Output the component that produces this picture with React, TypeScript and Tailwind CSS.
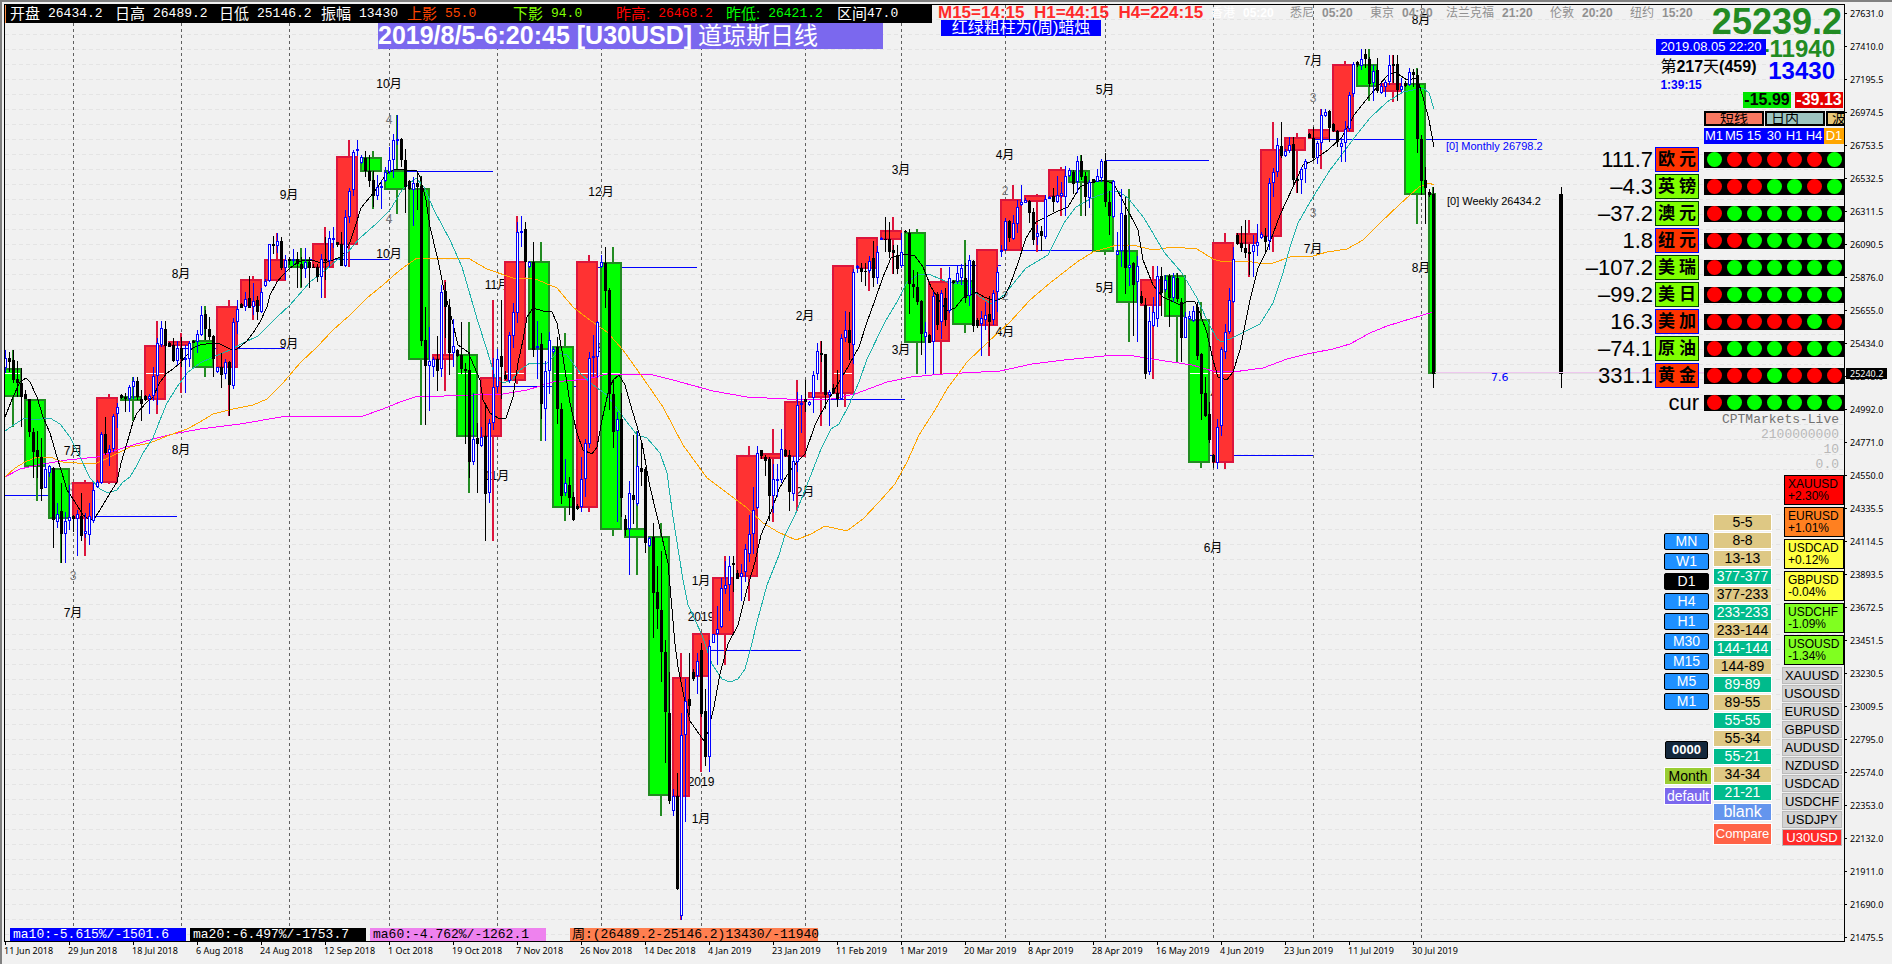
import clsx from "clsx";

// [x, width, wickX, up, high, top, bottom, low]
type Week = [number, number, number, number, number, number, number, number];
// [up, high, top, bottom, low]
type Day = [number, number, number, number, number];

const weeks: { week: Week; days: Day[] }[] = [
  { week: [0, 22, 13, 0, 350, 368, 397, 427], days: [[1, 350, 358, 368, 373], [0, 352, 358, 362, 372], [0, 350, 360, 380, 383], [0, 361, 379, 383, 397], [0, 368, 383, 397, 427]] },
  { week: [24, 22, 37, 0, 399, 399, 467, 501], days: [[0, 390, 394, 399, 399], [0, 399, 399, 432, 437], [0, 428, 432, 452, 478], [0, 431, 450, 457, 478], [0, 438, 457, 489, 501], [1, 463, 469, 488, 488]] },
  { week: [48, 22, 61, 0, 468, 468, 519, 563], days: [[1, 465, 466, 473, 477], [0, 467, 468, 520, 548], [1, 503, 514, 522, 528], [0, 483, 511, 534, 563], [1, 512, 521, 534, 563], [1, 485, 517, 521, 530]] },
  { week: [72, 22, 85, 1, 480, 482, 519, 556], days: [[0, 515, 516, 519, 532], [1, 510, 514, 519, 556], [0, 493, 516, 536, 541], [1, 513, 531, 534, 538], [1, 503, 516, 535, 545], [1, 483, 490, 521, 523]] },
  { week: [96, 22, 109, 1, 394, 397, 483, 484], days: [[1, 480, 482, 487, 488], [1, 432, 434, 483, 484], [0, 417, 434, 453, 455], [1, 445, 449, 453, 466], [1, 414, 416, 449, 452], [1, 403, 407, 414, 428]] },
  { week: [120, 22, 133, 0, 377, 396, 401, 421], days: [[0, 394, 395, 398, 399], [0, 393, 397, 399, 412], [1, 385, 387, 399, 412], [1, 377, 381, 387, 399], [0, 377, 381, 397, 400], [0, 390, 399, 404, 421]] },
  { week: [144, 22, 157, 1, 321, 345, 400, 414], days: [[0, 395, 396, 400, 401], [1, 394, 396, 399, 414], [1, 367, 376, 396, 401], [1, 338, 343, 376, 405], [1, 321, 328, 345, 347], [0, 321, 329, 346, 375]] },
  { week: [168, 22, 181, 1, 333, 341, 346, 393], days: [[0, 342, 343, 347, 347], [0, 338, 345, 361, 362], [1, 341, 348, 361, 365], [0, 337, 348, 359, 367], [1, 345, 358, 360, 393], [1, 341, 343, 359, 367]] },
  { week: [192, 22, 205, 0, 306, 340, 368, 377], days: [[0, 340, 341, 343, 343], [1, 330, 334, 342, 353], [1, 306, 315, 335, 336], [0, 310, 314, 329, 340], [0, 317, 329, 337, 340], [0, 335, 336, 359, 377]] },
  { week: [216, 22, 229, 1, 300, 306, 368, 416], days: [[1, 367, 367, 372, 373], [0, 353, 367, 375, 388], [1, 359, 362, 374, 379], [0, 361, 362, 385, 416], [1, 318, 322, 386, 389], [1, 300, 309, 322, 334]] },
  { week: [240, 22, 253, 1, 276, 279, 306, 320], days: [[0, 303, 304, 308, 308], [1, 292, 299, 307, 311], [0, 276, 298, 308, 308], [1, 283, 301, 307, 315], [0, 296, 300, 312, 320], [1, 288, 292, 312, 313]] },
  { week: [264, 22, 277, 1, 233, 259, 281, 282], days: [[1, 279, 281, 286, 287], [1, 244, 244, 281, 282], [0, 236, 244, 246, 254], [1, 233, 241, 246, 253], [0, 237, 241, 268, 270], [1, 255, 260, 268, 280]] },
  { week: [288, 22, 301, 0, 248, 259, 268, 288], days: [[0, 257, 259, 261, 265], [1, 249, 259, 261, 265], [0, 252, 259, 264, 288], [0, 257, 264, 269, 287], [1, 248, 262, 269, 278], [0, 257, 262, 268, 288]] },
  { week: [312, 22, 325, 1, 227, 243, 268, 298], days: [[0, 264, 267, 268, 268], [0, 264, 267, 277, 282], [1, 254, 259, 277, 298], [0, 237, 259, 261, 280], [1, 231, 238, 261, 267], [1, 227, 238, 239, 248]] },
  { week: [336, 22, 349, 1, 140, 156, 245, 267], days: [[0, 242, 242, 245, 247], [0, 232, 244, 266, 266], [1, 210, 217, 266, 267], [1, 188, 191, 217, 223], [1, 150, 152, 190, 196], [1, 140, 149, 151, 156]] },
  { week: [360, 22, 373, 0, 151, 157, 172, 209], days: [[1, 155, 157, 163, 164], [0, 151, 158, 171, 177], [0, 155, 171, 181, 187], [0, 171, 180, 196, 207], [1, 175, 187, 196, 200], [1, 180, 186, 188, 209]] },
  { week: [384, 22, 397, 0, 115, 170, 190, 214], days: [[1, 167, 172, 181, 182], [1, 147, 160, 172, 174], [1, 134, 140, 160, 178], [1, 115, 139, 141, 145], [0, 138, 139, 160, 167], [0, 149, 160, 187, 213]] },
  { week: [408, 22, 421, 0, 176, 188, 360, 425], days: [[0, 180, 181, 189, 190], [1, 177, 183, 190, 226], [0, 173, 183, 187, 210], [0, 176, 186, 341, 346], [0, 307, 340, 366, 425], [1, 327, 361, 366, 411]] },
  { week: [432, 22, 445, 1, 280, 354, 360, 391], days: [[1, 357, 359, 367, 377], [0, 336, 359, 371, 391], [1, 285, 292, 369, 377], [0, 282, 291, 307, 338], [0, 299, 307, 353, 375], [1, 319, 346, 353, 367]] },
  { week: [456, 22, 469, 0, 322, 354, 437, 493], days: [[0, 349, 350, 356, 357], [0, 322, 355, 369, 374], [0, 363, 369, 371, 444], [0, 352, 370, 462, 478], [1, 393, 439, 462, 465], [0, 423, 438, 444, 493]] },
  { week: [480, 22, 493, 1, 300, 377, 437, 541], days: [[1, 427, 437, 446, 447], [0, 403, 436, 494, 541], [1, 419, 423, 493, 503], [1, 358, 387, 423, 430], [1, 349, 359, 387, 393], [0, 300, 356, 367, 399]] },
  { week: [504, 22, 517, 1, 216, 261, 381, 384], days: [[0, 371, 375, 379, 380], [1, 332, 335, 381, 383], [1, 303, 312, 336, 348], [1, 222, 232, 313, 323], [1, 216, 231, 233, 247], [0, 222, 229, 262, 277]] },
  { week: [528, 22, 541, 0, 242, 261, 350, 441], days: [[1, 261, 262, 267, 268], [0, 242, 262, 350, 357], [1, 321, 346, 348, 379], [0, 333, 344, 404, 419], [1, 361, 371, 409, 441], [1, 332, 340, 371, 394]] },
  { week: [552, 22, 565, 0, 333, 346, 508, 521], days: [[1, 347, 349, 352, 354], [0, 337, 347, 409, 424], [0, 403, 409, 496, 504], [1, 459, 483, 493, 496], [0, 477, 485, 498, 515], [0, 492, 497, 520, 521]] },
  { week: [576, 22, 589, 1, 255, 261, 508, 512], days: [[0, 504, 506, 509, 510], [1, 457, 479, 507, 512], [1, 439, 443, 479, 497], [1, 352, 358, 444, 448], [1, 335, 356, 358, 377], [1, 321, 322, 357, 378]] },
  { week: [600, 22, 613, 0, 247, 262, 530, 536], days: [[1, 255, 262, 267, 268], [0, 247, 263, 291, 308], [0, 288, 290, 394, 410], [0, 380, 394, 432, 448], [1, 412, 419, 431, 522], [0, 393, 419, 498, 517]] },
  { week: [624, 22, 637, 0, 431, 528, 538, 575], days: [[0, 515, 519, 530, 536], [1, 481, 493, 529, 575], [0, 435, 495, 500, 524], [1, 431, 466, 504, 506], [0, 443, 468, 472, 486], [0, 467, 469, 543, 553]] },
  { week: [648, 22, 661, 0, 523, 536, 796, 816], days: [[1, 537, 538, 546, 547], [0, 523, 537, 593, 638], [0, 566, 592, 609, 629], [0, 551, 610, 652, 682], [0, 640, 652, 712, 763], [0, 672, 713, 801, 804]] },
  { week: [672, 18, 681, 1, 653, 677, 797, 920], days: [[1, 789, 796, 811, 816], [0, 773, 796, 889, 890], [1, 713, 735, 916, 920], [1, 679, 701, 735, 822], [0, 653, 699, 706, 715]] },
  { week: [692, 18, 701, 1, 632, 633, 677, 772], days: [[0, 669, 672, 679, 681], [1, 653, 661, 676, 694], [0, 643, 650, 714, 717], [0, 689, 711, 757, 766], [1, 640, 646, 757, 772]] },
  { week: [712, 22, 725, 1, 556, 577, 635, 665], days: [[1, 634, 634, 643, 643], [1, 606, 629, 634, 665], [1, 578, 588, 627, 628], [1, 561, 585, 589, 594], [1, 556, 566, 585, 611], [0, 556, 563, 565, 592]] },
  { week: [736, 22, 749, 1, 446, 455, 577, 601], days: [[0, 570, 573, 579, 579], [1, 564, 573, 577, 601], [1, 544, 549, 572, 582], [1, 515, 534, 554, 562], [1, 487, 510, 534, 554], [1, 446, 453, 508, 509]] },
  { week: [760, 22, 773, 1, 429, 453, 459, 522], days: [[0, 450, 450, 456, 459], [0, 455, 457, 461, 476], [0, 457, 459, 496, 521], [1, 464, 479, 496, 513], [1, 464, 479, 481, 497], [1, 429, 449, 480, 483]] },
  { week: [784, 22, 797, 1, 380, 401, 457, 511], days: [[0, 449, 450, 456, 457], [0, 450, 455, 492, 511], [1, 456, 461, 494, 501], [1, 392, 405, 462, 472], [1, 395, 403, 405, 433], [0, 380, 399, 402, 412]] },
  { week: [808, 22, 821, 1, 341, 392, 398, 426], days: [[1, 401, 402, 405, 406], [1, 371, 375, 398, 413], [1, 343, 351, 374, 380], [0, 341, 353, 355, 362], [0, 354, 354, 395, 409], [1, 390, 392, 395, 426]] },
  { week: [832, 22, 845, 1, 265, 265, 394, 407], days: [[0, 384, 388, 393, 394], [0, 370, 393, 399, 407], [1, 334, 338, 399, 400], [1, 311, 330, 338, 342], [0, 312, 330, 343, 360], [1, 269, 272, 345, 364]] },
  { week: [856, 22, 869, 1, 237, 237, 269, 291], days: [[1, 265, 266, 268, 273], [0, 263, 268, 272, 282], [0, 263, 271, 272, 286], [1, 256, 261, 271, 273], [0, 241, 258, 278, 287], [1, 246, 252, 278, 284]] },
  { week: [880, 22, 893, 1, 217, 230, 240, 274], days: [[1, 237, 238, 239, 240], [0, 217, 239, 240, 252], [0, 222, 239, 252, 258], [0, 245, 250, 253, 274], [0, 245, 255, 269, 274], [1, 233, 252, 266, 268]] },
  { week: [904, 22, 917, 0, 229, 232, 343, 374], days: [[0, 230, 231, 232, 233], [0, 229, 233, 284, 314], [0, 270, 284, 287, 298], [0, 272, 287, 302, 305], [0, 300, 301, 334, 355], [1, 322, 332, 337, 374]] },
  { week: [928, 22, 941, 1, 268, 281, 342, 374], days: [[0, 334, 335, 343, 343], [1, 292, 296, 342, 374], [0, 292, 294, 325, 330], [1, 290, 293, 322, 339], [0, 288, 298, 320, 326], [1, 267, 278, 311, 313]] },
  { week: [952, 22, 965, 0, 240, 280, 325, 333], days: [[0, 280, 281, 283, 284], [1, 265, 273, 282, 284], [1, 264, 268, 278, 285], [0, 263, 278, 298, 303], [1, 255, 260, 296, 306], [0, 260, 261, 326, 332]] },
  { week: [976, 22, 989, 1, 249, 249, 326, 356], days: [[0, 318, 320, 326, 328], [1, 311, 318, 324, 356], [1, 302, 315, 320, 330], [0, 296, 314, 322, 347], [1, 290, 293, 320, 325], [1, 267, 272, 292, 312]] },
  { week: [1000, 22, 1013, 1, 185, 199, 251, 251], days: [[1, 245, 250, 252, 257], [1, 218, 221, 250, 251], [0, 220, 221, 238, 242], [1, 215, 223, 239, 240], [1, 200, 207, 224, 233], [1, 185, 202, 205, 206]] },
  { week: [1024, 22, 1037, 1, 194, 195, 202, 252], days: [[1, 198, 200, 203, 203], [0, 200, 201, 213, 223], [0, 208, 212, 240, 245], [1, 225, 233, 237, 245], [0, 226, 231, 236, 251], [1, 195, 199, 237, 239]] },
  { week: [1048, 18, 1061, 1, 167, 169, 197, 216], days: [[1, 196, 197, 198, 199], [0, 188, 196, 202, 212], [1, 176, 195, 202, 203], [1, 182, 193, 196, 198], [1, 166, 176, 197, 216]] },
  { week: [1068, 22, 1081, 0, 155, 170, 183, 216], days: [[1, 168, 170, 176, 177], [0, 170, 172, 184, 194], [1, 156, 161, 182, 193], [0, 155, 161, 177, 180], [0, 172, 176, 197, 216], [1, 180, 182, 198, 208]] },
  { week: [1092, 22, 1105, 0, 180, 180, 252, 255], days: [[0, 179, 179, 183, 183], [1, 169, 176, 182, 182], [1, 159, 161, 178, 182], [0, 153, 161, 202, 207], [0, 191, 202, 216, 235], [1, 180, 181, 217, 218]] },
  { week: [1116, 22, 1129, 0, 189, 250, 303, 342], days: [[1, 232, 251, 255, 255], [1, 189, 213, 251, 267], [0, 197, 215, 268, 294], [1, 245, 265, 268, 286], [0, 262, 263, 285, 336], [1, 256, 266, 282, 342]] },
  { week: [1140, 22, 1153, 1, 266, 279, 306, 379], days: [[0, 291, 296, 303, 304], [0, 298, 305, 374, 379], [1, 307, 321, 372, 375], [1, 297, 312, 326, 327], [1, 266, 276, 319, 327], [0, 267, 276, 293, 316]] },
  { week: [1164, 22, 1177, 0, 273, 275, 317, 362], days: [[1, 275, 280, 290, 292], [0, 274, 276, 298, 327], [1, 273, 277, 298, 302], [0, 273, 278, 299, 302], [0, 298, 302, 338, 362], [1, 312, 317, 338, 338]] },
  { week: [1188, 22, 1201, 0, 302, 319, 463, 468], days: [[1, 311, 316, 319, 320], [1, 306, 311, 321, 322], [0, 302, 307, 356, 360], [0, 353, 354, 394, 420], [0, 377, 393, 416, 417], [0, 402, 414, 440, 443]] },
  { week: [1212, 22, 1225, 1, 233, 242, 463, 469], days: [[0, 454, 455, 462, 468], [1, 419, 427, 463, 469], [1, 347, 349, 426, 436], [1, 324, 332, 352, 359], [1, 288, 300, 332, 334], [1, 247, 259, 302, 303]] },
  { week: [1236, 22, 1249, 1, 220, 233, 244, 277], days: [[0, 233, 235, 244, 245], [0, 226, 243, 248, 252], [0, 220, 248, 253, 258], [0, 244, 252, 254, 275], [1, 235, 245, 252, 277], [1, 224, 242, 246, 256]] },
  { week: [1260, 22, 1273, 1, 122, 149, 237, 252], days: [[1, 232, 234, 238, 239], [0, 228, 236, 242, 253], [1, 178, 183, 241, 250], [1, 168, 172, 183, 197], [1, 138, 145, 172, 177], [0, 122, 146, 156, 158]] },
  { week: [1284, 22, 1297, 1, 133, 137, 151, 193], days: [[1, 149, 151, 156, 157], [1, 137, 145, 151, 153], [0, 137, 144, 180, 185], [0, 177, 179, 181, 193], [1, 167, 169, 180, 194], [1, 159, 161, 169, 183]] },
  { week: [1308, 22, 1321, 1, 109, 129, 139, 169], days: [[0, 133, 134, 138, 138], [0, 127, 138, 158, 159], [1, 141, 143, 158, 164], [1, 109, 115, 143, 150], [1, 109, 112, 116, 117], [0, 110, 111, 128, 142]] },
  { week: [1332, 22, 1345, 1, 61, 64, 132, 132], days: [[0, 123, 124, 131, 132], [0, 130, 131, 142, 147], [1, 138, 143, 147, 162], [1, 121, 129, 143, 162], [1, 92, 95, 129, 131], [1, 62, 64, 94, 97]] },
  { week: [1356, 22, 1369, 0, 49, 64, 87, 101], days: [[0, 61, 62, 65, 67], [1, 49, 59, 66, 70], [0, 49, 54, 59, 68], [0, 57, 59, 84, 87], [1, 65, 71, 83, 101], [0, 58, 70, 91, 93]] },
  { week: [1380, 22, 1393, 1, 55, 83, 92, 102], days: [[1, 83, 86, 93, 94], [1, 80, 82, 87, 97], [1, 55, 65, 82, 85], [0, 55, 64, 66, 83], [0, 55, 64, 90, 101], [1, 78, 86, 90, 92]] },
  { week: [1404, 22, 1417, 0, 68, 83, 195, 224], days: [[0, 81, 83, 86, 87], [1, 68, 72, 85, 86], [0, 69, 72, 75, 87], [0, 69, 75, 139, 153], [0, 135, 139, 181, 195], [0, 167, 180, 188, 224]] },
  { week: [1428, 8, 1433, 0, 187, 193, 374, 374], days: [[0, 189, 192, 195, 197], [0, 187, 194, 374, 388]] },
];

const averages = [
  { color: "#ff00ff", points: "5,477 20,469 43,464 67,460 97,457 123,448 153,439 173,434 200,429 240,424 287,416 363,416 383,409 400,402 415,397 503,394 527,390 553,382 587,379 607,374 653,375 673,380 713,391 747,397 787,399 831,399 855,394 887,382 911,377 943,374 1000,371 1032,364 1064,360 1104,356 1128,355 1152,359 1192,365 1213,371 1233,372 1263,368 1287,359 1307,354 1333,349 1350,344 1370,333 1387,326 1400,322 1433,312" },
  { color: "#ffa500", points: "5,477 15,468 25,462 37,457 50,457 63,462 77,463 97,463 110,457 130,447 150,443 167,436 187,429 200,422 213,414 233,409 253,405 267,399 283,383 300,363 317,347 333,330 350,315 367,298 383,285 400,270 417,258 468,258 487,269 513,278 533,278 557,288 573,307 587,318 607,332 623,350 643,378 663,407 683,445 707,478 730,495 747,508 763,523 778,532 796,540 811,534 825,526 847,531 863,519 879,502 895,484 907,462 919,435 935,410 947,389 967,362 988,342 1010,322 1030,300 1050,283 1077,262 1093,252 1117,245 1137,246 1153,250 1173,247 1197,249 1213,259 1223,262 1233,261 1247,261 1263,264 1273,263 1290,257 1313,256 1327,252 1347,249 1363,240 1380,223 1400,204 1419,187 1429,183 1434,185" },
  { color: "#20b2aa", points: "5,431 15,424 25,418 33,420 50,418 60,424 70,437 80,457 90,478 100,489 108,493 117,490 123,482 130,477 137,465 143,453 153,438 160,420 167,403 177,387 187,373 200,363 213,357 230,350 243,343 258,336 277,317 290,305 310,282 323,272 333,263 347,253 360,238 377,223 390,210 402,190 416,178 424,187 434,210 450,240 462,267 478,322 487,350 495,377 503,383 512,380 520,370 530,363 547,363 557,353 567,355 580,373 593,385 607,395 623,417 637,435 647,438 660,453 667,473 673,517 683,580 688,605 702,635 712,664 722,679 730,682 738,679 745,669 751,647 757,622 767,585 779,555 785,535 795,515 807,485 821,449 831,429 839,424 849,405 859,382 867,359 885,322 897,302 907,282 919,274 931,275 947,282 967,285 980,297 992,304 1004,295 1026,268 1048,255 1064,223 1076,207 1092,198 1108,192 1118,191 1128,198 1144,218 1164,252 1182,273 1197,298 1207,320 1217,339 1222,342 1230,339 1260,324 1273,303 1283,273 1290,247 1298,223 1313,197 1330,170 1358,133 1370,118 1387,102 1403,92 1423,88 1429,93 1434,109" },
  { color: "#000000", points: "5,417 13,397 20,382 26,378 30,382 37,397 43,417 50,433 57,457 62,473 67,490 75,502 83,515 90,520 94,519 100,510 110,493 117,482 121,463 127,443 133,422 137,413 147,402 153,397 160,382 167,373 173,369 180,363 187,355 193,348 200,345 212,343 220,344 230,349 237,349 247,341 253,333 260,322 267,307 270,295 277,282 283,275 290,268 297,263 303,260 313,260 320,263 327,262 333,260 340,257 345,252 350,242 355,227 361,208 370,197 378,187 382,180 388,173 396,169 417,171 420,177 426,200 430,227 438,260 444,290 452,320 458,345 468,352 480,380 483,400 490,413 498,418 506,418 513,397 518,363 523,340 527,317 533,308 543,311 552,312 557,323 563,357 570,403 577,433 583,450 592,454 597,447 602,420 608,393 613,380 619,375 625,385 633,413 642,443 650,487 658,520 668,563 675,644 678,667 684,697 690,721 704,741 708,732 714,707 720,674 728,644 738,625 747,589 755,562 761,535 771,512 779,489 787,475 797,462 805,454 815,425 827,402 835,389 849,365 859,347 867,322 875,300 883,277 891,258 903,254 915,256 923,267 931,287 939,300 947,311 955,308 963,298 976,292 984,297 996,301 1004,297 1010,285 1018,263 1026,238 1036,222 1056,212 1068,207 1080,187 1092,182 1104,180 1114,184 1124,203 1138,230 1143,260 1153,285 1163,297 1180,305 1188,301 1195,302 1200,313 1207,333 1213,360 1218,377 1227,380 1233,372 1240,350 1250,300 1258,268 1267,250 1280,215 1293,187 1303,165 1312,161 1328,150 1342,137 1354,115 1370,95 1387,76 1395,72 1407,80 1417,78 1423,97 1429,120 1434,147" },
];

// monthly opening levels: [x1, x2, y]
const levels = [
  [5, 70, 495], [72, 177, 516], [181, 285, 348], [289, 389, 259], [405, 493, 171], [497, 596, 386], [598, 697, 267],
  [697, 801, 650], [805, 905, 399], [901, 1001, 265], [1005, 1105, 250], [1105, 1209, 160], [1210, 1313, 455], [1313, 1537, 139],
];

const monthLines = [73, 181, 289, 389, 497, 601, 701, 805, 901, 1005, 1105, 1213, 1313, 1421];

const monthLabels: [string, number, number][] = [
  ["10月", 389, 84], ["10月", 389, 254], ["9月", 289, 195], ["9月", 289, 344], ["8月", 181, 274], ["8月", 181, 450],
  ["7月", 73, 451], ["7月", 73, 613], ["11月", 497, 285], ["11月", 497, 476], ["12月", 601, 192], ["12月", 601, 348],
  ["2月", 805, 316], ["2月", 805, 492], ["3月", 901, 170], ["3月", 901, 350], ["4月", 1005, 155], ["4月", 1005, 332],
  ["5月", 1105, 90], ["5月", 1105, 288], ["6月", 1213, 391], ["6月", 1213, 548], ["7月", 1313, 61], ["7月", 1313, 249],
  ["8月", 1421, 20], ["8月", 1421, 268], ["1月", 701, 581], ["2019", 701, 617], ["2019", 701, 782], ["1月", 701, 819],
];

const quarterLabels: [string, number, number][] = [
  ["4", 389, 120], ["4", 389, 219], ["3", 73, 487], ["3", 73, 576], ["2", 1005, 191], ["2", 1005, 296], ["3", 1313, 98], ["3", 1313, 213],
];

const prices = [
  "27631.0", "27410.0", "27195.5", "26974.5", "26753.5", "26532.5", "26311.5", "26090.5", "25876.0", "25655.0",
  "25434.0", "25213.0", "24992.0", "24771.0", "24550.0", "24335.5", "24114.5", "23893.5", "23672.5", "23451.5",
  "23230.5", "23009.5", "22795.0", "22574.0", "22353.0", "22132.0", "21911.0", "21690.0", "21475.5",
];

const dates = [
  "11 Jun 2018", "29 Jun 2018", "18 Jul 2018", "6 Aug 2018", "24 Aug 2018", "12 Sep 2018", "1 Oct 2018", "19 Oct 2018",
  "7 Nov 2018", "26 Nov 2018", "14 Dec 2018", "4 Jan 2019", "23 Jan 2019", "11 Feb 2019", "1 Mar 2019", "20 Mar 2019",
  "8 Apr 2019", "28 Apr 2019", "16 May 2019", "4 Jun 2019", "23 Jun 2019", "11 Jul 2019", "30 Jul 2019",
];

const ohlc = [
  { label: "开盘", value: "26434.2", style: "w-[105px] text-white" },
  { label: "日高", value: "26489.2", style: "w-[104px] text-white" },
  { label: "日低", value: "25146.2", style: "w-[102px] text-white" },
  { label: "振幅", value: "13430", style: "w-[86px] text-white" },
  { label: "上影", value: "55.0", style: "w-[106px] text-[#ff4500]" },
  { label: "下影", value: "94.0", style: "w-[103px] text-[#7fff00]" },
  { label: "昨高:", value: "26468.2", style: "w-[110px] text-[#ff0000]" },
  { label: "昨低:", value: "26421.2", style: "w-[111px] text-[#00ff00]" },
];

const clocks = [
  { city: "香港", time: "05:20", style: "w-[79px] text-white" },
  { city: "悉尼", time: "05:20", style: "w-20 text-[#909090]" },
  { city: "東京", time: "04:20", style: "w-[76px] text-[#909090]" },
  { city: "法兰克福", time: "21:20", style: "w-[104px] text-[#909090]" },
  { city: "伦敦", time: "20:20", style: "w-20 text-[#909090]" },
  { city: "纽约", time: "15:20", style: "w-[70px] text-[#909090]" },
];

const symbols = [
  { value: "111.7", name: "欧元", up: true, dots: "GRRRRRG" },
  { value: "–4.3", name: "英镑", up: false, dots: "RRRGGRG" },
  { value: "–37.2", name: "澳元", up: false, dots: "RGGGGGG" },
  { value: "1.8", name: "纽元", up: true, dots: "RRGGGGG" },
  { value: "–107.2", name: "美瑞", up: false, dots: "RGGGGGG" },
  { value: "–99.2", name: "美日", up: false, dots: "RGGGGGG" },
  { value: "16.3", name: "美加", up: true, dots: "RRRRRGR" },
  { value: "–74.1", name: "原油", up: false, dots: "RGGGRGG" },
  { value: "331.1", name: "黄金", up: true, dots: "RRRGRRR" },
];

const timeframes = ["MN", "W1", "D1", "H4", "H1", "M30", "M15", "M5", "M1"];

const pairs = [
  "5-5", "8-8", "13-13", "377-377", "377-233", "233-233", "233-144", "144-144",
  "144-89", "89-89", "89-55", "55-55", "55-34", "55-21", "34-34", "21-21",
];

const movers = [
  { name: "XAUUSD", change: "+2.30%", bg: "bg-[#ff0000]" },
  { name: "EURUSD", change: "+1.01%", bg: "bg-[#ff8020]" },
  { name: "USDCAD", change: "+0.12%", bg: "bg-[#ffff40]" },
  { name: "GBPUSD", change: "-0.04%", bg: "bg-[#ffff40]" },
  { name: "USDCHF", change: "-1.09%", bg: "bg-[#80ff20]" },
  { name: "USOUSD", change: "-1.34%", bg: "bg-[#80ff20]" },
];

const watchlist = ["XAUUSD", "USOUSD", "EURUSD", "GBPUSD", "AUDUSD", "NZDUSD", "USDCAD", "USDCHF", "USDJPY", "U30USD"];

function Chart() {
  return (
    <svg className="block h-full w-full" shapeRendering="crispEdges">
      <g transform="translate(-5 -5)">
        {Array.from({ length: 62 }, (_, i) => (
          <line key={i} x1={5} x2={1844} y1={19.5 + i * 15} y2={19.5 + i * 15} stroke="#e4e4e4" strokeDasharray="4 3" />
        ))}
        {monthLines.map((x) => (
          <line key={x} x1={x + 0.5} x2={x + 0.5} y1={5} y2={941} stroke="#606060" strokeDasharray="3 3" />
        ))}
        <line x1={5} x2={1844} y1={373.5} y2={373.5} stroke="#e0e0e0" />
        {levels.map(([x1, x2, y]) => (
          <line key={x1 + "-" + y} x1={x1} x2={x2} y1={y + 0.5} y2={y + 0.5} stroke="#0000ff" />
        ))}
        <g fontSize={12} textAnchor="middle" dominantBaseline="central">
          {monthLabels.map(([text, x, y]) => (
            <text key={x + "-" + y} x={x} y={y} fill="#000">{text}</text>
          ))}
          {quarterLabels.map(([text, x, y]) => (
            <text key={x + "-" + y} x={x} y={y} fill="#777">{text}</text>
          ))}
        </g>

        {weeks.map(({ week: [x, w, wickX, up, high, top, bottom, low] }) => (
          <g key={x}>
            <rect x={wickX - 1} y={high} width={2} height={low - high} fill={up ? "#dc143c" : "#228b22"} />
            <rect
              x={x + 1}
              y={top + 1}
              width={w - 2}
              height={bottom - top - 2}
              fill={up ? "#ff3232" : "#00ff00"}
              stroke={up ? "#dc143c" : "#228b22"}
              strokeWidth={2}
            />
            {top < 373 && bottom > 374 && w > 8 && (
              <line x1={x + 2} x2={x + w - 2} y1={373.5} y2={373.5} stroke="#fff" />
            )}
          </g>
        ))}

        {averages.map((line) => (
          <polyline key={line.color} points={line.points} fill="none" stroke={line.color} />
        ))}

        {weeks.map(({ week, days }) =>
          days.map(([up, high, top, bottom, low], i) => {
            const x = Math.max(week[0], 4) + 1 + i * 4;
            return (
              <g key={x}>
                <rect x={x} y={high} width={1} height={Math.max(low - high, 1)} fill={up ? "#0000ff" : "#000"} />
                {up ? (
                  <rect x={x - 0.5} y={top + 0.5} width={2} height={Math.max(bottom - top - 1, 1)} fill="#fff" stroke="#0000ff" />
                ) : (
                  <rect x={x - 1} y={top} width={3} height={Math.max(bottom - top, 1)} fill="#000" />
                )}
              </g>
            );
          })
        )}

        {/* projected bar */}
        <rect x={1561} y={187} width={1} height={201} fill="#000" />
        <rect x={1559} y={194} width={4} height={180} fill="#000" />
        <line x1={1435} x2={1844} y1={372.5} y2={372.5} stroke="#eec8ee" />

        <g fontSize={11} dominantBaseline="central">
          <text x={1446} y={146} fill="#0000ff">[0] Monthly 26798.2</text>
          <text x={1447} y={201} fill="#000">[0] Weekly 26434.2</text>
          <text x={1491} y={377} fill="#0000ff" fontFamily="DejaVu Sans, sans-serif">7.6</text>
        </g>
      </g>
    </svg>
  );
}

function Header() {
  return (
    <div className="absolute left-0 top-0 flex items-start whitespace-nowrap">
      <div className="flex h-[18px] w-[927px] items-center overflow-hidden border-l border-[#ff8c40] bg-black pl-1">
        {ohlc.map((item) => (
          <div key={item.label} className={clsx("flex shrink-0 items-center gap-2 text-[15px] leading-[18px]", item.style)}>
            <span>{item.label}</span>
            <span className="font-['Liberation_Mono',monospace] text-[13px]">{item.value}</span>
          </div>
        ))}
        <div className="flex items-center text-[15px] leading-[18px] text-white">
          区间<span className="font-['Liberation_Mono',monospace] text-[13px]">47.0</span>
        </div>
      </div>
      <div className="ml-1 w-[275px]">
        <div className="whitespace-pre pl-0.5 text-[17px] font-bold leading-[15px] text-[#ff2a2a]">M15=14:15  H1=44:15  H4=224:15</div>
        <div className="ml-[5px] w-40 bg-[#0000ff] text-center text-base leading-4 text-white">红绿粗柱为(周)蜡烛</div>
      </div>
      <div className="flex text-xs leading-4">
        {clocks.map((clock) => (
          <div key={clock.city} className={clsx("flex gap-2", clock.style)}>
            <span>{clock.city}</span>
            <span className="font-bold">{clock.time}</span>
          </div>
        ))}
      </div>
    </div>
  );
}

function Dots({ dots }: { dots: string }) {
  return (
    <div className="flex h-4 w-[140px] items-center bg-black">
      {dots.split("").map((dot, i) => (
        <span key={i} className="flex w-5 justify-center">
          <span className={clsx("h-[15px] w-[15px] rounded-full", dot === "R" ? "bg-[#ff0000]" : "bg-[#00ff00]")} />
        </span>
      ))}
    </div>
  );
}

function Quote() {
  return (
    <div className="flex flex-col items-end">
      <div className="pr-0.5 text-4xl font-bold leading-[33px] text-[#228b22]">25239.2</div>
      <div className="flex items-start">
        <div className="z-10 flex flex-col">
          <div className="mt-px bg-[#0000ff] px-1 text-[13px] leading-4 text-white">2019.08.05 22:20</div>
          <div className="px-1 text-base font-bold leading-6">
            <span className="text-base font-normal">第</span>217<span className="text-base font-normal">天</span>(459)
          </div>
          <div className="px-1 text-xs font-bold leading-3 text-[#0000ff]">1:39:15</div>
        </div>
        <div className="-ml-1 pr-[9px] text-right text-2xl font-bold leading-[22px]">
          <div className="text-[#228b22]">-11940</div>
          <div className="text-[#0000ff]">13430</div>
        </div>
      </div>
      <div className="mt-px flex gap-1 pr-px text-base font-bold leading-4">
        <span className="w-12 bg-[#00e600] text-center">-15.99</span>
        <span className="w-12 bg-[#e60000] text-center text-white">-39.13</span>
      </div>
    </div>
  );
}

function Matrix() {
  return (
    <div className="mt-[3px] flex flex-col items-end">
      <div className="flex w-[140px] gap-px overflow-hidden">
        <button className="h-[15px] w-[60px] shrink-0 border-2 border-black bg-[#f87860] text-sm leading-[11px]">短线</button>
        <button className="h-[15px] w-[60px] shrink-0 border-2 border-black bg-[#9cc4c0] pl-1 text-left text-sm leading-[11px]">日内</button>
        <button className="h-[15px] w-[60px] shrink-0 border-2 border-black bg-[#e8c878] pl-1 text-left text-sm leading-[11px]">波段</button>
      </div>
      <div className="mt-0.5 flex h-4 text-center text-[13px] leading-4 text-white">
        {["M1", "M5", "15", "30", "H1", "H4"].map((tf) => (
          <span key={tf} className="w-5 bg-[#0000ff]">{tf}</span>
        ))}
        <span className="w-5 bg-[#ffa500]">D1</span>
      </div>
      <table className="mt-0.5 border-collapse">
        <tbody>
          {symbols.map((symbol) => (
            <tr key={symbol.name} className="h-[27px]">
              <td className="p-0 pr-0.5 text-right text-[22px] leading-6">{symbol.value}</td>
              <td className="p-0">
                <div
                  className={clsx(
                    "flex h-[25px] w-11 items-center justify-between border px-0.5 text-[17px] font-bold leading-5",
                    symbol.up ? "border-[#0000ff] bg-[#ff3300]" : "border-[#004000] bg-[#7fff00]"
                  )}
                >
                  <span>{symbol.name[0]}</span>
                  <span>{symbol.name[1]}</span>
                </div>
              </td>
              <td className="p-0 pl-[5px]"><Dots dots={symbol.dots} /></td>
            </tr>
          ))}
          <tr className="h-[27px]">
            <td />
            <td className="p-0 text-right text-[22px] leading-6">cur</td>
            <td className="p-0 pl-[5px]"><Dots dots="RGGGGGG" /></td>
          </tr>
        </tbody>
      </table>
      <div className="-mt-1 pr-[5px] text-right font-['Liberation_Mono',monospace] text-[13px] leading-[15px] text-[#b8b8b8]">
        <div className="text-[#707070]">CPTMarkets-Live</div>
        <div>2100000000</div>
        <div>10</div>
        <div>0.0</div>
      </div>
    </div>
  );
}

function Controls() {
  return (
    <div className="mt-[3px] flex items-start justify-end">
      <div className="mr-px mt-[58px] flex w-12 flex-col">
        {timeframes.map((tf) => (
          <button
            key={tf}
            className={clsx(
              "mb-[3px] h-[17px] w-[45px] rounded-[2px] border border-black text-sm leading-[15px] text-white",
              tf === "D1" ? "bg-black" : "bg-[#1e90ff]"
            )}
          >
            {tf}
          </button>
        ))}
        <button className="ml-px mt-7 h-[18px] w-[43px] rounded-[2px] border border-black bg-[#14283c] text-[13px] font-bold leading-4 text-white">0000</button>
        <button className="mt-2 h-[18px] w-12 border border-white bg-[#9acd32] text-sm leading-4">Month</button>
        <button className="mt-0.5 h-[18px] w-12 border border-white bg-[#7b68ee] text-sm leading-4 text-white">default</button>
      </div>
      <div className="mt-[39px] flex w-[59px] flex-col">
        {pairs.map((pair, i) => (
          <button
            key={pair}
            className={clsx(
              "mb-px h-[17px] border border-white text-sm leading-[15px]",
              i > 2 && i % 2 === 1 ? "bg-[#00bb8c] text-white" : "bg-[#dec884] text-black"
            )}
          >
            {pair}
          </button>
        ))}
        <button className="mt-px h-[18px] border border-white bg-[#6495ed] text-base leading-4 text-white">blank</button>
        <button className="mt-0.5 h-[22px] border border-white bg-[#ff6347] text-[13px] leading-5 text-white">Compare</button>
      </div>
      <div className="ml-[10px] flex w-[62px] flex-col">
        {movers.map((mover) => (
          <div key={mover.name} className={clsx("mb-0.5 ml-0.5 h-[30px] border border-black pl-[3px] text-xs leading-3 pt-0.5", mover.bg)}>
            <div>{mover.name}</div>
            <div>{mover.change}</div>
          </div>
        ))}
        {watchlist.map((name) => (
          <button
            key={name}
            className={clsx(
              "mb-px h-[17px] w-[60px] border border-[#bbb] text-[13px] leading-[15px]",
              name === "U30USD" ? "bg-[#ff2a2a] text-white" : "bg-[#d3d3d3] text-black"
            )}
          >
            {name}
          </button>
        ))}
      </div>
    </div>
  );
}

function Averages() {
  return (
    <div className="absolute bottom-0 left-[5px] flex gap-1 font-['Liberation_Mono','Noto_Sans_CJK_SC',monospace] text-[13px] leading-[13px] whitespace-nowrap">
      <span className="w-44 bg-[#0000ff] pl-[3px] text-white">ma10:-5.615%/-1501.6</span>
      <span className="w-44 bg-black pl-[3px] text-white">ma20:-6.497%/-1753.7</span>
      <span className="w-44 bg-[#ee82ee] pl-[3px]">ma60:-4.762%/-1262.1</span>
      <span className="ml-5 h-[13px] w-[248px] bg-[#ff7f50] pl-0.5">周:(26489.2-25146.2)13430/-11940</span>
    </div>
  );
}

export default function App() {
  return (
    <div className="flex h-screen flex-col overflow-hidden border-l-2 border-t-2 border-[#808080] bg-[#f1f1f1] pl-0.5 pt-0.5 font-['Liberation_Sans','Noto_Sans_CJK_SC',sans-serif] text-black">
      <div className="flex min-h-0 flex-1">
        <div className="relative min-w-0 flex-1 border border-black">
          <Chart />
          <Header />
          <div className="absolute left-[373px] top-[18px] flex h-[26px] w-[505px] items-center gap-1.5 whitespace-nowrap bg-[#7b68ee] text-white">
            <span className="text-[25px] font-bold">2019/8/5-6:20:45 [U30USD]</span>
            <span className="text-2xl">道琼斯日线</span>
          </div>
          <div className="absolute right-0 top-0">
            <Quote />
            <Matrix />
            <Controls />
          </div>
          <Averages />
        </div>
        <div className="relative w-[47px] font-['Noto_Sans',sans-serif] text-[9px]">
          <div className="-mt-[7px]">
            {prices.map((price) => (
              <div key={price} className="flex h-[33px] items-center gap-[3px]">
                <span className="h-px w-0.5 bg-black" />
                {price}
              </div>
            ))}
          </div>
          <div className="absolute left-px top-[364px] w-[41px] bg-black pl-1 leading-[11px] text-white">25240.2</div>
        </div>
      </div>
      <div className="flex h-[22px] overflow-hidden font-['Noto_Sans',sans-serif] text-[9px] leading-3">
        {dates.map((date) => (
          <div key={date} className="w-16 shrink-0 whitespace-nowrap">
            <div className="ml-px h-[3px] w-px bg-black" />
            {date}
          </div>
        ))}
      </div>
    </div>
  );
}
